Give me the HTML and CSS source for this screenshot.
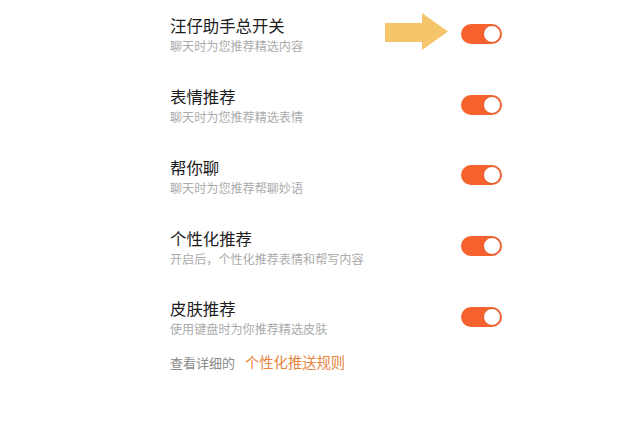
FILE: index.html
```html
<!DOCTYPE html>
<html lang="zh-CN">
<head>
<meta charset="utf-8">
<link rel="stylesheet" href="styles.css">
</head>
<body>
<div class="page">
  <div class="list">
    <div class="row">
      <div class="text">
        <div class="title">汪仔助手总开关</div>
        <div class="sub">聊天时为您推荐精选内容</div>
      </div>
      <svg class="arrow" width="64" height="38" viewBox="0 0 64 38"><polygon points="0,10 37,10 37,0 63,18.5 37,37 37,29 0,29" fill="#f5c56b"/></svg>
      <div class="toggle"><span class="knob"></span></div>
    </div>
    <div class="row">
      <div class="text">
        <div class="title">表情推荐</div>
        <div class="sub">聊天时为您推荐精选表情</div>
      </div>
      <div class="toggle"><span class="knob"></span></div>
    </div>
    <div class="row">
      <div class="text">
        <div class="title">帮你聊</div>
        <div class="sub">聊天时为您推荐帮聊妙语</div>
      </div>
      <div class="toggle"><span class="knob"></span></div>
    </div>
    <div class="row">
      <div class="text">
        <div class="title">个性化推荐</div>
        <div class="sub">开启后，个性化推荐表情和帮写内容</div>
      </div>
      <div class="toggle"><span class="knob"></span></div>
    </div>
    <div class="row">
      <div class="text">
        <div class="title">皮肤推荐</div>
        <div class="sub">使用键盘时为你推荐精选皮肤</div>
      </div>
      <div class="toggle"><span class="knob"></span></div>
    </div>
  </div>
  <div class="footer">查看详细的<span class="link">个性化推送规则</span></div>
</div>
</body>
</html>
```

FILE: styles.css
```css
html, body {
  margin: 0;
  padding: 0;
  background: #ffffff;
}
body {
  width: 640px;
  height: 427px;
  overflow: hidden;
  font-family: "Noto Sans CJK SC", "Noto Sans", sans-serif;
}
.page {
  padding-left: 170px;
  width: 332px;
}
.row {
  position: relative;
  height: 70.75px;
  display: flex;
  align-items: center;
  justify-content: space-between;
}
.text {
  display: flex;
  flex-direction: column;
  margin-bottom: 2px;
}
.title {
  font-size: 16.4px;
  line-height: 24px;
  color: #1c1c1c;
}
.sub {
  font-size: 12.1px;
  line-height: 18px;
  color: #ababab;
}
.toggle {
  width: 41px;
  height: 20px;
  border-radius: 10px;
  background: #f5622e;
  margin-bottom: 3px;
  display: flex;
  align-items: center;
  justify-content: flex-end;
  padding-right: 1px;
  box-sizing: border-box;
}
.knob {
  width: 18px;
  height: 18px;
  border-radius: 50%;
  background: #ffffff;
  box-sizing: border-box;
  border: 1px solid #e35a2b;
}
.arrow {
  position: absolute;
  left: 215px;
  top: 13px;
}
.footer {
  margin-top: -1px;
  font-size: 13px;
  line-height: 18px;
  color: #8a8a8a;
}
.link {
  margin-left: 10px;
  font-size: 14.3px;
  color: #e8843c;
}
```
